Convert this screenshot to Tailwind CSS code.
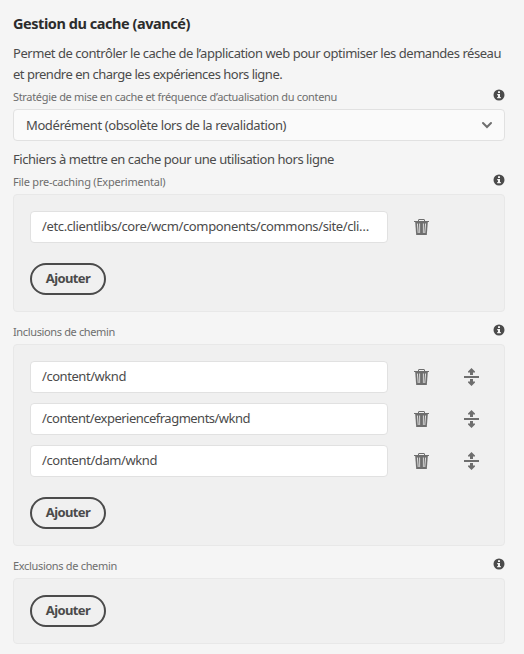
<!DOCTYPE html>
<html lang="fr">
<head>
<meta charset="utf-8">
<title>Gestion du cache (avancé)</title>
<script src="https://cdn.jsdelivr.net/npm/@tailwindcss/browser@4"></script>
</head>
<body class="bg-[#f5f5f5]">
<svg class="hidden">
  <symbol id="info" viewBox="0 0 12 12">
    <circle cx="6" cy="6" r="5.5" fill="#4b4b4b"/>
    <path d="M5 2.3h2v1.7H5zM4.2 5H7v3h.8v1.2H4.2V8H5V6.2h-.8z" fill="#f5f5f5"/>
  </symbol>
  <symbol id="trash" viewBox="0 0 16 18">
    <path d="M4.500 3V1.900q0-.4.5-.4h5q.5 0 .5.4V3" fill="none" stroke="#6e6e6e"/>
    <path d="M0 3h15v1H0z" fill="#6e6e6e"/>
    <path d="M1.200 4h12.600l-1 13H2.200z" fill="#6e6e6e"/>
    <path d="M2.900 5.500h1l.8 9.500h-1zM5.100 5.500h1V15h-.8zM8.900 5.500h1L9.700 15h-.8zM11.100 5.500h1l-.8 9.500h-1z" fill="#dedede"/>
  </symbol>
  <symbol id="move" viewBox="0 0 16 18">
    <path d="M0 8h15v2H0zM7.500 0L11 3.600V4.500H9V7H6V4.500H4v-.9zM6 11h3v2.500h2v.9L7.500 18 4 14.400v-.9h2z" fill="#6e6e6e"/>
  </symbol>
</svg>
<main class="w-[524px] h-[654px] pl-[13px] pr-[19px] pt-[13px] text-[13px] text-[#4b4b4b] font-['Noto_Sans',sans-serif] whitespace-nowrap overflow-hidden">
  <h1 class="h-[21px] leading-[21px] text-[14.5px] font-bold text-[#2c2c2c] tracking-[-0.45px]">Gestion du cache (avancé)</h1>
  <p class="mt-[9px] leading-[21px]"><span class="tracking-[-0.452px]">Permet de contrôler le cache de l’application web pour optimiser les demandes réseau</span><br><span class="tracking-[-0.5px]">et prendre en charge les expériences hors ligne.</span></p>

  <div class="h-6 flex justify-between text-[11px] text-[#6e6e6e]">
    <label class="leading-6 tracking-[-0.32px]">Stratégie de mise en cache et fréquence d’actualisation du contenu</label>
    <svg class="size-3 mt-1"><use href="#info"/></svg>
  </div>
  <div class="h-8 border border-[#e1e1e1] rounded bg-[#fafafa] pl-3 pr-[11px] flex items-center justify-between">
    <span class="pt-px leading-[21px] tracking-[-0.395px]">Modérément (obsolète lors de la revalidation)</span>
    <svg class="w-3 h-2" viewBox="0 0 12 8" fill="none" stroke="#6e6e6e" stroke-width="2" stroke-linecap="round"><path d="M2 2l4 4 4-4"/></svg>
  </div>

  <p class="mt-2 h-[21px] leading-[21px] tracking-[-0.443px]">Fichiers à mettre en cache pour une utilisation hors ligne</p>
  <div class="h-6 flex justify-between text-[11px] text-[#6e6e6e]">
    <label class="leading-6 tracking-[-0.22px]">File pre-caching (Experimental)</label>
    <svg class="size-3 mt-1"><use href="#info"/></svg>
  </div>
  <section class="h-[118px] border border-[#e8e8e8] rounded bg-[#f0f0f0] p-4">
    <div class="h-8 flex items-center">
      <div class="w-[358px] h-8 leading-[29px] border border-[#e1e1e1] rounded bg-white pl-[11px] tracking-[-0.368px]">/etc.clientlibs/core/wcm/components/commons/site/cli…</div>
      <svg class="w-4 h-[18px] ml-[26px]"><use href="#trash"/></svg>
    </div>
    <button class="mt-5 block w-[76px] h-8 border-2 border-[#4b4b4b] rounded-full font-bold leading-[26px] pb-[2px] tracking-[-0.6px]">Ajouter</button>
  </section>

  <div class="mt-2 h-6 flex justify-between text-[11px] text-[#6e6e6e]">
    <label class="leading-6 tracking-[-0.36px]">Inclusions de chemin</label>
    <svg class="size-3 mt-1"><use href="#info"/></svg>
  </div>
  <section class="h-[202px] border border-[#e8e8e8] rounded bg-[#f0f0f0] p-4">
    <div class="flex flex-col gap-2.5">
      <div class="h-8 flex items-center">
        <div class="w-[358px] h-8 leading-[29px] border border-[#e1e1e1] rounded bg-white pl-[11px] tracking-[-0.446px]">/content/wknd</div>
        <svg class="w-4 h-[18px] ml-[26px]"><use href="#trash"/></svg>
        <svg class="w-4 h-[18px] ml-[34px]"><use href="#move"/></svg>
      </div>
      <div class="h-8 flex items-center">
        <div class="w-[358px] h-8 leading-[29px] border border-[#e1e1e1] rounded bg-white pl-[11px] tracking-[-0.51px]">/content/experiencefragments/wknd</div>
        <svg class="w-4 h-[18px] ml-[26px]"><use href="#trash"/></svg>
        <svg class="w-4 h-[18px] ml-[34px]"><use href="#move"/></svg>
      </div>
      <div class="h-8 flex items-center">
        <div class="w-[358px] h-8 leading-[29px] border border-[#e1e1e1] rounded bg-white pl-[11px] tracking-[-0.41px]">/content/dam/wknd</div>
        <svg class="w-4 h-[18px] ml-[26px]"><use href="#trash"/></svg>
        <svg class="w-4 h-[18px] ml-[34px]"><use href="#move"/></svg>
      </div>
    </div>
    <button class="mt-5 block w-[76px] h-8 border-2 border-[#4b4b4b] rounded-full font-bold leading-[26px] pb-[2px] tracking-[-0.6px]">Ajouter</button>
  </section>

  <div class="mt-2 h-6 flex justify-between text-[11px] text-[#6e6e6e]">
    <label class="leading-6 tracking-[-0.32px]">Exclusions de chemin</label>
    <svg class="size-3 mt-1"><use href="#info"/></svg>
  </div>
  <section class="h-[66px] border border-[#e8e8e8] rounded bg-[#f0f0f0] p-4">
    <button class="block w-[76px] h-8 border-2 border-[#4b4b4b] rounded-full font-bold leading-[26px] pb-[2px] tracking-[-0.6px]">Ajouter</button>
  </section>
</main>
</body>
</html>
